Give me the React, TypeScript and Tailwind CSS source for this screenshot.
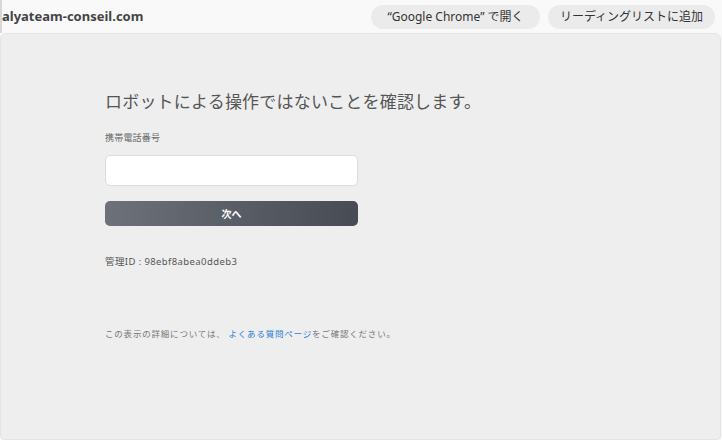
import React from "react";

const font = { fontFamily: '"Noto Sans", "Noto Sans CJK JP", sans-serif' };

export default function App() {
  return (
    <div className="w-[722px] h-[440px] overflow-hidden bg-[#f9f9f9] flex flex-col" style={font}>
      {/* Top bar */}
      <div className="h-[33px] flex items-center shrink-0 border-l-2 border-[#d8d8d8]">
        <div className="text-[13px] font-bold text-[#444] leading-none">alyateam-conseil.com</div>
        <div className="ml-auto flex items-center gap-[8px] pr-[7px]">
          <button className="w-[169px] h-[24px] rounded-full bg-[#ebebeb] text-[12px] text-[#333] leading-none">
            “Google Chrome” で開く
          </button>
          <button className="w-[167px] h-[24px] rounded-full bg-[#ebebeb] text-[12px] text-[#333] leading-none">
            リーディングリストに追加
          </button>
        </div>
      </div>

      {/* Content panel */}
      <div className="flex-1 mr-[1px] bg-[#eeeeee] rounded-t-[6px] rounded-b-[4px] border border-[#e4e4e4] pl-[104px] pt-[56px]">
        <h1 className="text-[17px] text-[#555] leading-[24px] tracking-[0.2px]">
          ロボットによる操作ではないことを確認します。
        </h1>
        <div className="mt-[18px] text-[9px] text-[#666] leading-[12px] tracking-[0.2px]">携帯電話番号</div>
        <input
          className="mt-[11px] block w-[253px] h-[31px] bg-white border border-[#dcdcdc] rounded-[5px] outline-none"
          type="text"
        />
        <button className="mt-[15px] w-[253px] h-[25px] rounded-[5px] bg-gradient-to-r from-[#6d727a] to-[#474c54] text-white text-[10px] font-bold leading-none">
          次へ
        </button>
        <div className="mt-[30px] text-[9.5px] text-[#555] leading-[12px] tracking-[0.4px]">管理ID : 98ebf8abea0ddeb3</div>
        <div className="mt-[60px] text-[8.5px] text-[#777] leading-[12px] tracking-[0.8px]">
          この表示の詳細については、 <span className="text-[#2a7fd4]">よくある質問ページ</span>をご確認ください。
        </div>
      </div>
    </div>
  );
}
